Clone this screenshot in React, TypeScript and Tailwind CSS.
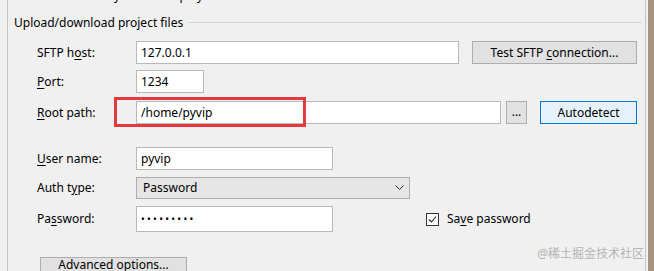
import { ReactNode } from "react";

const font = { fontFamily: '"Noto Sans", "Noto Sans CJK SC", sans-serif' };

const Label = ({ children }: { children: ReactNode }) => (
  <div className="w-[99px] shrink-0 text-[12px] text-black">{children}</div>
);

const Input = ({ value, w }: { value: string; w: string }) => (
  <div
    className={`${w} h-[23px] shrink-0 border border-[#b9b9b9] bg-white pl-[4px] flex items-center text-[12px] text-black`}
  >
    {value}
  </div>
);

const Btn = ({ children, w, cls = "" }: { children: ReactNode; w: string; cls?: string }) => (
  <div
    className={`${w} h-[23px] shrink-0 border flex items-center justify-center text-[12px] text-black ${
      cls || "border-[#adadad] bg-[#e1e1e1]"
    }`}
  >
    {children}
  </div>
);

const U = ({ children }: { children: ReactNode }) => (
  <span className="underline decoration-1 underline-offset-[2px]">{children}</span>
);

const App = () => {
  return (
    <div className="flex h-[271px] w-[654px] overflow-hidden bg-[#f0f0f0]" style={font}>
      <div className="w-[7px] shrink-0" />
      <div className="relative w-[639px] shrink-0 border-l border-r border-[#c4c4c4]">
        {/* clipped line from the section above */}
        <div className="h-[4px] overflow-hidden pl-[6px]">
          <div className="-mt-[12px] leading-[15px] text-[12px] text-black">
            Remote files are synced to deploy
          </div>
        </div>

        <div className="mt-[11px] flex items-center pl-[6px] pr-[3px]">
          <span className="text-[12px] leading-[15px] text-black">Upload/download project files</span>
          <div className="ml-[5px] h-px flex-1 bg-[#d5d5d5]" />
        </div>

        <div className="pl-[29px]">
          <div className="mt-[11px] flex items-center">
            <Label>
              SFTP h<U>o</U>st:
            </Label>
            <Input value="127.0.0.1" w="w-[323px]" />
            <Btn w="w-[165px] ml-[13px]">
              Test SFTP&nbsp;<U>c</U>onnection...
            </Btn>
          </div>

          <div className="mt-[6px] flex items-center">
            <Label>
              <U>P</U>ort:
            </Label>
            <Input value="1234" w="w-[68px]" />
          </div>

          <div className="mt-[8px] flex items-center">
            <Label>
              <U>R</U>oot path:
            </Label>
            <Input value="/home/pyvip" w="w-[365px]" />
            <Btn w="w-[21px] ml-[5px]">
              <span className="-mt-[2px]">...</span>
            </Btn>
            <Btn w="w-[97px] ml-[13px]" cls="border-[#0078d7] bg-[#e5f1fb]">
              Autodetect
            </Btn>
          </div>

          <div className="mt-[23px] flex items-center">
            <Label>
              <U>U</U>ser name:
            </Label>
            <Input value="pyvip" w="w-[197px]" />
          </div>

          <div className="mt-[7px] flex items-center">
            <Label>
              Auth t<U>y</U>pe:
            </Label>
            <div className="flex h-[22px] w-[274px] items-center justify-between border border-[#adadad] bg-[#e5e5e5] pl-[6px] pr-[4px] text-[12px] text-black">
              <span>Password</span>
              <svg width="9" height="6" viewBox="0 0 9 6" className="mr-[1px]">
                <path d="M0.5 0.5 L4.5 4.5 L8.5 0.5" fill="none" stroke="#333" strokeWidth="1" />
              </svg>
            </div>
          </div>

          <div className="mt-[7px] flex items-center">
            <Label>
              Pa<U>s</U>sword:
            </Label>
            <div className="flex h-[26px] w-[197px] shrink-0 items-center border border-[#b9b9b9] bg-white pl-[4px] text-[10px] tracking-[2.3px] text-black">
              •••••••••
            </div>
            <div className="ml-[93px] flex items-center text-[12px] text-black">
              <div className="flex h-[13px] w-[13px] items-center justify-center border border-[#333] bg-white">
                <svg width="11" height="11" viewBox="0 0 11 11">
                  <path d="M2 5.5 L4.5 8 L9 2.5" fill="none" stroke="#222" strokeWidth="1.1" />
                </svg>
              </div>
              <span className="ml-[8px]">
                Sa<U>v</U>e password
              </span>
            </div>
          </div>

          <div className="mt-[25px] pl-[3px]">
            <div className="flex h-[23px] w-[147px] justify-center border border-[#adadad] bg-[#e1e1e1] text-[12px] leading-[15px] text-black">
              <span className="-mt-[1px]">
                A<U>d</U>vanced options...
              </span>
            </div>
          </div>
        </div>

        {/* highlight box drawn over the root path field */}
        <div className="absolute left-[106px] top-[97px] h-[30px] w-[192px] border-[3px] border-[#e23a3e]" />

        {/* watermark */}
        <div className="absolute right-[1px] top-[245px] text-[12px] text-[#b4b4b4]">
          @稀土掘金技术社区
        </div>
      </div>
      <div className="w-[2px] shrink-0" />
      <div className="flex-1 bg-[#a8947e]" />
    </div>
  );
};

export default App;
